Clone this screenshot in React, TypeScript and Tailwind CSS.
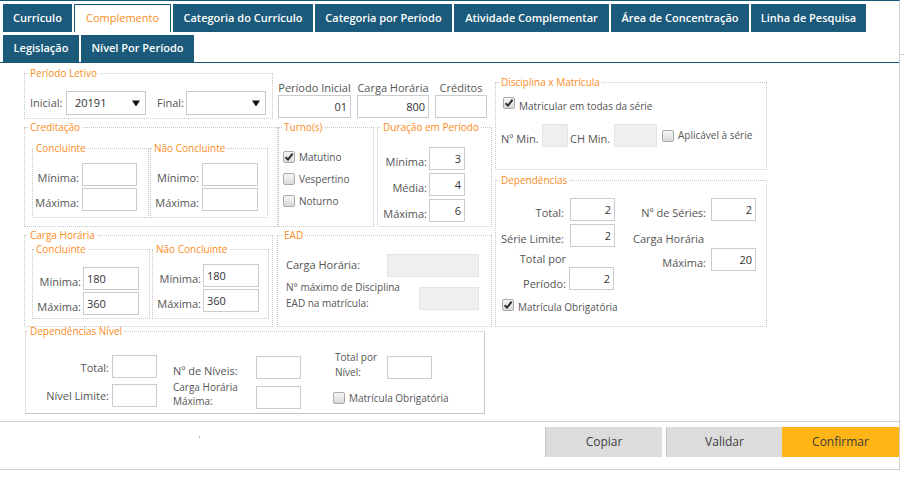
import type { ReactNode } from "react";

const tabsTop = [
  { label: "Currículo", w: "w-[69px]" },
  { label: "Complemento", w: "w-[97px]", active: true },
  { label: "Categoria do Currículo", w: "w-[140px]" },
  { label: "Categoria por Período", w: "w-[137px]" },
  { label: "Atividade Complementar", w: "w-[155px]" },
  { label: "Área de Concentração", w: "w-[138px]" },
  { label: "Linha de Pesquisa", w: "w-[115px]" },
];

const tabsBottom = [
  { label: "Legislação", w: "w-[76px]" },
  { label: "Nível Por Período", w: "w-[113px]" },
];

const Tab = ({ label, w, active }: { label: string; w: string; active?: boolean }) => (
  <div
    className={`flex h-full shrink-0 items-center justify-center whitespace-nowrap text-[11px] ${w} ${
      active
        ? "border border-b-0 border-[#1b5a7a] bg-white font-normal text-[#fb8c23]"
        : "bg-[#1b5a7a] font-semibold text-white"
    }`}
  >
    {label}
  </div>
);

// Fieldset with orange legend
const Box = ({
  title,
  className = "",
  legendClass = "ml-[3px] leading-[14px]",
  children,
}: {
  title: string;
  className?: string;
  legendClass?: string;
  children?: ReactNode;
}) => (
  <fieldset className={`shrink-0 border border-dotted border-[#c6c6c6] ${className}`}>
    <legend className={`px-[2px] text-[10px] text-[#fb8c23] ${legendClass}`}>{title}</legend>
    {children}
  </fieldset>
);

const Input = ({
  value = "",
  className = "",
  left = false,
  off = false,
}: {
  value?: string;
  className?: string;
  left?: boolean;
  off?: boolean;
}) => (
  <div
    className={`h-[23px] shrink-0 border px-[3px] text-[11px] leading-[21px] text-[#333] ${
      off ? "border-[#e4e4e4] bg-[#efefef]" : "border-[#cbcbcb] bg-white"
    } ${left ? "text-left" : "text-right"} ${className}`}
  >
    {value}
  </div>
);

const Select = ({ value = "", className = "" }: { value?: string; className?: string }) => (
  <div
    className={`flex h-[24px] shrink-0 items-center justify-between border border-[#c8c8c8] bg-white pl-[8px] pr-[5px] text-[11px] text-[#333] ${className}`}
  >
    <span>{value}</span>
    <svg width="8" height="7" viewBox="0 0 8 7">
      <path d="M0 0.5 H8 L4 6.5 Z" fill="#111" />
    </svg>
  </div>
);

const Check = ({ on, className = "" }: { on?: boolean; className?: string }) => (
  <span
    className={`flex h-[12px] w-[12px] shrink-0 items-center justify-center rounded-[2px] border border-[#a9a9a9] bg-linear-to-b from-[#f6f6f6] to-[#dadada] ${className}`}
  >
    {on && (
      <svg width="10" height="10" viewBox="0 0 10 10">
        <path d="M1.6 5.2 L4 7.6 L8.6 1.6" fill="none" stroke="#2e2e2e" strokeWidth="2" />
      </svg>
    )}
  </span>
);

const Lbl = ({ children, className = "self-end" }: { children: ReactNode; className?: string }) => (
  <span className={`whitespace-nowrap text-right text-[11px] leading-[16px] ${className}`}>{children}</span>
);

export default function App() {
  return (
    <div className="flex h-[477px] w-[904px] bg-white font-['Open_Sans',sans-serif] text-[#555]">
      <div className="flex h-[470px] w-[900px] shrink-0 flex-col border-t border-r border-b border-t-[#1b5a7a] border-r-[#cdcdcd] border-b-[#cdcdcd]">
        {/* tabs */}
        <div className="shrink-0 border-b border-[#1b5a7a] pl-[3px] pt-[3px]">
          <div className="flex h-[28px] gap-[2px]">
            {tabsTop.map((t) => (
              <Tab key={t.label} {...t} />
            ))}
          </div>
          <div className="mt-[3px] flex h-[27px] gap-[2px]">
            {tabsBottom.map((t) => (
              <Tab key={t.label} {...t} />
            ))}
          </div>
        </div>

        {/* form */}
        <div className="flex h-[358px] shrink-0 pl-[24px] pt-[3px]">
          <div className="w-[468px] shrink-0">
            {/* row 1 */}
            <div className="flex h-[53px]">
              <Box title="Período Letivo" className="h-[53px] w-[249px]">
                <div className="mt-[11px] flex items-center pl-[5px] text-[11px]">
                  <span className="w-[36px]">Inicial:</span>
                  <Select value="20191" className="w-[80px]" />
                  <span className="ml-[11px] w-[29px]">Final:</span>
                  <Select className="w-[80px]" />
                </div>
              </Box>
              <div className="ml-[5px] w-[73px] shrink-0 pt-[15px]">
                <div className="h-[14px] whitespace-nowrap text-center text-[11px] leading-[14px]">Período Inicial</div>
                <Input value="01" />
              </div>
              <div className="ml-[6px] w-[72px] shrink-0 pt-[15px]">
                <div className="h-[14px] whitespace-nowrap text-center text-[11px] leading-[14px]">Carga Horária</div>
                <Input value="800" />
              </div>
              <div className="ml-[6px] w-[52px] shrink-0 pt-[15px]">
                <div className="h-[14px] whitespace-nowrap text-center text-[11px] leading-[14px]">Créditos</div>
                <Input />
              </div>
            </div>

            {/* row 2 */}
            <div className="mt-[1px] flex">
              <Box title="Creditação" className="h-[107px] w-[254px]">
                <div className="mt-[7px] flex pl-[7px]">
                  <Box title="Concluinte" className="h-[77px] w-[117px]" legendClass="ml-[1px] leading-[14px]">
                    <div className="mt-[8px] grid grid-cols-[46px_55px] gap-x-[3px] gap-y-[2px]">
                      <Lbl>Mínima:</Lbl>
                      <Input />
                      <Lbl>Máxima:</Lbl>
                      <Input />
                    </div>
                  </Box>
                  <Box title="Não Concluinte" className="ml-[1px] h-[77px] w-[118px]" legendClass="ml-[1px] leading-[14px]">
                    <div className="mt-[8px] grid grid-cols-[48px_56px] gap-x-[3px] gap-y-[2px]">
                      <Lbl>Mínimo:</Lbl>
                      <Input />
                      <Lbl>Máxima:</Lbl>
                      <Input />
                    </div>
                  </Box>
                </div>
              </Box>
              <Box title="Turno(s)" className="h-[107px] w-[96px]">
                <div className="mt-[12px] pl-[4px] text-[10px]">
                  {[
                    { l: "Matutino", on: true },
                    { l: "Vespertino" },
                    { l: "Noturno" },
                  ].map((r) => (
                    <div key={r.l} className="flex h-[22px] items-center gap-[4px]">
                      <Check on={r.on} />
                      <span>{r.l}</span>
                    </div>
                  ))}
                </div>
              </Box>
              <Box title="Duração em Período" className="ml-[3px] h-[107px] w-[115px]">
                <div className="mt-[13px] grid grid-cols-[49px_36px] gap-x-[2px] gap-y-[3px]">
                  <Lbl>Mínima:</Lbl>
                  <Input value="3" className="h-[22px]" />
                  <Lbl>Média:</Lbl>
                  <Input value="4" className="h-[22px]" />
                  <Lbl>Máxima:</Lbl>
                  <Input value="6" className="h-[22px]" />
                </div>
              </Box>
            </div>

            {/* row 3 */}
            <div className="mt-[1px] flex">
              <Box title="Carga Horária" className="h-[99px] w-[249px]">
                <div className="mt-[2px] flex pl-[7px]">
                  <Box title="Concluinte" className="h-[75px] w-[118px]" legendClass="ml-[1px] leading-[10px]">
                    <div className="mt-[13px] grid grid-cols-[48px_56px] gap-x-[2px] gap-y-[2px]">
                      <Lbl>Mínima:</Lbl>
                      <Input value="180" left />
                      <Lbl>Máxima:</Lbl>
                      <Input value="360" left />
                    </div>
                  </Box>
                  <Box title="Não Concluinte" className="ml-[2px] h-[75px] w-[117px]" legendClass="ml-[1px] leading-[10px]">
                    <div className="mt-[10px] grid grid-cols-[48px_56px] gap-x-[2px] gap-y-[2px]">
                      <Lbl>Mínima:</Lbl>
                      <Input value="180" left />
                      <Lbl>Máxima:</Lbl>
                      <Input value="360" left />
                    </div>
                  </Box>
                </div>
              </Box>
              <Box title="EAD" className="ml-[4px] h-[99px] w-[215px]" legendClass="ml-[4px] leading-[14px]">
                <div className="mt-[12px] flex items-center pl-[8px] pr-[12px] text-[11px]">
                  <span className="flex-1">Carga Horária:</span>
                  <Input off className="w-[92px]" />
                </div>
                <div className="mt-[2px] flex pl-[8px] pr-[12px] text-[10px]">
                  <div className="flex-1 whitespace-nowrap leading-[16px]">
                    N° máximo de Disciplina
                    <br />
                    EAD na matrícula:
                  </div>
                  <Input off className="mt-[8px] w-[60px]" />
                </div>
              </Box>
            </div>

            {/* row 4 */}
            <div className="-mt-[3px] ml-[1px] flex">
              <Box
                title="Dependências Nível"
                className="h-[90px] w-[460px] [border-bottom-style:solid] [border-right-style:solid]"
                legendClass="ml-[2px] leading-[14px]"
              >
                <div className="flex">
                  <div className="mt-[17px] grid grid-cols-[83px_45px] gap-x-[3px] gap-y-[3px]">
                    <Lbl className="self-center">Total:</Lbl>
                    <Input />
                    <Lbl className="self-center">Nível Limite:</Lbl>
                    <Input />
                  </div>
                  <div className="ml-[16px] mt-[18px]">
                    <div className="flex items-end">
                      <span className="w-[83px] whitespace-nowrap text-[11px] leading-[16px]">Nº de Níveis:</span>
                      <Input className="w-[45px]" />
                    </div>
                    <div className="mt-[1px] flex items-start">
                      <span className="w-[83px] text-[10px] leading-[14px]">
                        Carga Horária
                        <br />
                        Máxima:
                      </span>
                      <Input className="mt-[6px] w-[45px]" />
                    </div>
                  </div>
                  <div className="ml-[34px] mt-[12px]">
                    <div className="flex items-start">
                      <span className="w-[52px] text-[10px] leading-[15px]">
                        Total por
                        <br />
                        Nível:
                      </span>
                      <Input className="mt-[6px] w-[45px]" />
                    </div>
                    <div className="-ml-[2px] mt-[8px] flex h-[20px] items-center gap-[4px] text-[10px]">
                      <Check />
                      <span>Matrícula Obrigatória</span>
                    </div>
                  </div>
                </div>
              </Box>
            </div>
          </div>

          {/* right column */}
          <div className="ml-[3px] mt-[9px] w-[272px] shrink-0">
            <Box title="Disciplina x Matrícula" className="h-[95px] w-[272px]">
              <div className="mt-[8px] flex pl-[7px]">
                <Check on />
                <span className="ml-[4px] mt-[2px] text-[10px] leading-[14px]">Matricular em todas da série</span>
              </div>
              <div className="mt-[11px] flex items-end pl-[5px] text-[11px]">
                <span className="w-[41px] leading-[16px]">Nº Min.</span>
                <Input off className="w-[26px]" />
                <span className="ml-[2px] w-[44px] leading-[16px]">CH Min.</span>
                <Input off className="w-[43px]" />
                <Check className="ml-[5px] self-center" />
                <span className="ml-[4px] self-center text-[10px]">Aplicável à série</span>
              </div>
            </Box>
            <Box title="Dependências" className="mt-[3px] h-[154px] w-[272px]">
              <div className="flex">
                <div className="mt-[11px] w-[119px] shrink-0">
                  <div className="grid grid-cols-[68px_45px] gap-x-[6px] gap-y-[3px]">
                    <Lbl>Total:</Lbl>
                    <Input value="2" />
                    <Lbl>Série Limite:</Lbl>
                    <Input value="2" />
                  </div>
                  <div className="mt-[2px] flex">
                    <div className="w-[70px] text-right text-[11px] leading-[16px]">
                      <div className="mt-[2px]">Total por</div>
                      <div className="mt-[9px]">Período:</div>
                    </div>
                    <Input value="2" className="ml-[3px] mt-[18px] w-[45px]" />
                  </div>
                  <div className="mt-[7px] flex items-start pl-[6px]">
                    <Check on />
                    <span className="ml-[4px] mt-[1px] whitespace-nowrap text-[10px] leading-[14px]">Matrícula Obrigatória</span>
                  </div>
                </div>
                <div className="ml-[18px] mt-[11px] w-[123px] shrink-0">
                  <div className="flex items-end">
                    <span className="w-[73px] whitespace-nowrap text-right text-[11px] leading-[16px]">Nº de Séries:</span>
                    <Input value="2" className="ml-[5px] w-[45px]" />
                  </div>
                  <div className="mt-[10px] text-[11px] leading-[16px]">Carga Horária</div>
                  <div className="mt-[1px] flex items-end">
                    <span className="w-[73px] text-right text-[11px] leading-[16px]">Máxima:</span>
                    <Input value="20" className="ml-[5px] w-[45px]" />
                  </div>
                </div>
              </div>
            </Box>
          </div>
        </div>

        {/* footer */}
        <div className="flex h-[48px] shrink-0 border-t border-[#cdcdcd] pt-[5px]">
          <div className="ml-[199px] mt-[9px] h-[2px] w-[1px] bg-[#b5b5b5]" />
          <div className="ml-auto flex h-[30px] text-[12px] text-[#3c3c3c]">
            <button className="w-[117px] border-l border-[#c4c4c4] bg-[#dcdcdc]">Copiar</button>
            <button className="ml-[4px] w-[116px] border-l border-[#c4c4c4] bg-[#dcdcdc]">Validar</button>
            <button className="w-[117px] bg-[#ffb515]">Confirmar</button>
          </div>
        </div>
      </div>
      <div className="mt-[54px] h-[1px] w-[4px] bg-[#d0d0d0]" />
    </div>
  );
}
